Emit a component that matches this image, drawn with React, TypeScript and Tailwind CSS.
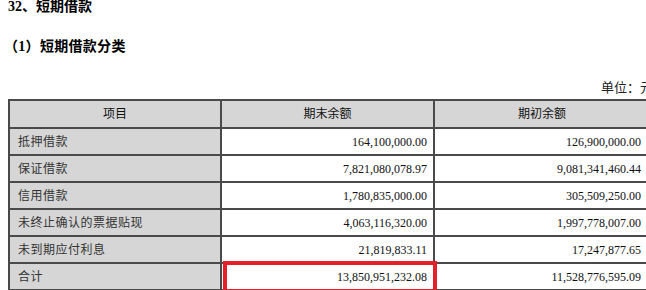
const rows = [
  { label: "抵押借款", end: "164,100,000.00", start: "126,900,000.00" },
  { label: "保证借款", end: "7,821,080,078.97", start: "9,081,341,460.44" },
  { label: "信用借款", end: "1,780,835,000.00", start: "305,509,250.00" },
  { label: "未终止确认的票据贴现", end: "4,063,116,320.00", start: "1,997,778,007.00" },
  { label: "未到期应付利息", end: "21,819,833.11", start: "17,247,877.65" },
  { label: "合计", end: "13,850,951,232.08", start: "11,528,776,595.09" },
];

const font = "font-['Liberation_Serif','Noto_Sans_CJK_SC',serif]";

export default function App() {
  return (
    <div className={`relative w-[646px] h-[290px] overflow-hidden bg-white text-black ${font}`}>
      <div className="w-[660px] pl-2">
        {/* Headings */}
        <h2 className="text-[14px] leading-[14px] font-bold">32、短期借款</h2>
        <h3 className="mt-[25px] text-[14px] leading-[16px] font-bold -ml-[4px] tracking-[0.3px]">（1）短期借款分类</h3>
        <div className="mt-[25px] pl-[593px] text-[13px] leading-[16px] text-[#222]">单位：元</div>

        {/* Table */}
        <table className="mt-[3px] w-[641px] table-fixed border-collapse text-[12px] text-[#111]">
          <colgroup>
            <col className="w-[212px]" />
            <col className="w-[213px]" />
            <col className="w-[216px]" />
          </colgroup>
          <thead>
            <tr className="h-[28px] bg-[#d6d6d6]">
              <th className="border-2 border-[#4a4a4a] font-normal text-center">项目</th>
              <th className="border-2 border-[#4a4a4a] font-normal text-center">期末余额</th>
              <th className="border-2 border-[#4a4a4a] font-normal text-center">期初余额</th>
            </tr>
          </thead>
          <tbody>
            {rows.map((r) => (
              <tr key={r.label} className="h-[27px]">
                <td className="border-2 border-[#4a4a4a] bg-[#d6d6d6] pl-2 text-[#333] tracking-[0.5px]">{r.label}</td>
                <td className="border-2 border-[#4a4a4a] pr-[6px] text-right">{r.end}</td>
                <td className="border-2 border-[#4a4a4a] pr-[8px] text-right">{r.start}</td>
              </tr>
            ))}
          </tbody>
        </table>
      </div>

      {/* Red highlight */}
      <div className="absolute left-[223px] top-[261px] w-[214px] h-[32px] border-4 border-[#e5202b]" />
    </div>
  );
}
